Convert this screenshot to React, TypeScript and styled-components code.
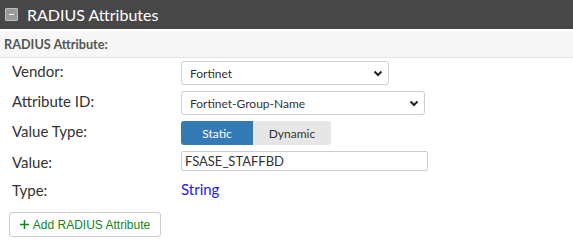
import React from "react";
import styled, { createGlobalStyle } from "styled-components";

const GlobalStyle = createGlobalStyle`
  body {
    margin: 0;
    background: #ffffff;
    font-family: Lato, "Liberation Sans", sans-serif;
  }
`;

const Panel = styled.div`
  width: 573px;
  background: #ffffff;
`;

const Header = styled.div`
  display: flex;
  align-items: center;
  gap: 9px;
  height: 29px;
  padding-left: 5px;
  background: #474747;
  color: #ffffff;
  font-size: 16px;
  box-sizing: border-box;
`;

const Collapse = styled.span`
  display: flex;
  align-items: center;
  justify-content: center;
  width: 11px;
  height: 11px;
  background: #9a9a9a;
  border: 1px solid #bdbdbd;
  border-radius: 1px;

  &::after {
    content: "";
    width: 5px;
    height: 1px;
    background: #ffffff;
  }
`;

const SubHeader = styled.div`
  margin-top: 2px;
  height: 27px;
  padding-left: 4px;
  display: flex;
  align-items: center;
  background: #f7f7f7;
  border-bottom: 1px solid #e3e3e3;
  font-size: 12.7px;
  font-weight: 700;
  color: #555555;
  box-sizing: border-box;
`;

const Form = styled.div`
  display: grid;
  grid-template-columns: 169px 1fr;
  row-gap: 6px;
  padding: 3px 0 0 12px;
`;

const Label = styled.div<{ $top?: number }>`
  font-size: 15px;
  color: #333333;
  padding-top: ${(p) => p.$top ?? 1}px;
  line-height: 18px;
`;

const SelectBox = styled.div<{ $w: number }>`
  width: ${(p) => p.$w}px;
  height: 24px;
  box-sizing: border-box;
  border: 1px solid #cfcfcf;
  border-radius: 3px;
  display: flex;
  align-items: center;
  justify-content: space-between;
  padding: 0 5px 0 8px;
  font-size: 12px;
  color: #333333;
`;

const Toggle = styled.div`
  display: flex;
  width: 150px;
  height: 24px;
  border-radius: 3px;
  overflow: hidden;
`;

const ToggleOption = styled.div<{ $active?: boolean; $w: number }>`
  width: ${(p) => p.$w}px;
  display: flex;
  align-items: center;
  justify-content: center;
  font-size: 12px;
  background: ${(p) => (p.$active ? "#337ab7" : "#e6e6e6")};
  color: ${(p) => (p.$active ? "#ffffff" : "#333333")};
`;

const TextInput = styled.div`
  width: 247px;
  height: 20px;
  box-sizing: border-box;
  border: 1px solid #cccccc;
  border-radius: 2px;
  display: flex;
  align-items: center;
  padding-left: 3px;
  font-size: 13px;
  color: #333333;
`;

const TypeValue = styled.div`
  font-size: 15px;
  color: #1a1aff;
  padding-top: 3px;
  line-height: 18px;
`;

const AddButton = styled.button`
  margin: 13px 0 0 9px;
  width: 152px;
  height: 25px;
  border: 1px solid #cccccc;
  border-radius: 3px;
  background: #ffffff;
  color: #11861a;
  font-family: "Liberation Sans", Arial, sans-serif;
  font-size: 12px;
  display: flex;
  align-items: center;
  justify-content: center;
  gap: 4px;
  padding: 0;
`;

const Plus = () => (
  <svg width="9" height="9" viewBox="0 0 9 9">
    <path d="M4.5 0 V9 M0 4.5 H9" stroke="#11861a" strokeWidth="1.5" />
  </svg>
);

const Chevron = () => (
  <svg width="10" height="7" viewBox="0 0 10 7">
    <path d="M1.5 1.5 L5 5 L8.5 1.5" fill="none" stroke="#222" strokeWidth="2" />
  </svg>
);

export default function App() {
  return (
    <Panel>
      <GlobalStyle />
      <Header>
        <Collapse />
        RADIUS Attributes
      </Header>
      <SubHeader>RADIUS Attribute:</SubHeader>
      <Form>
        <Label>Vendor:</Label>
        <SelectBox $w={208}>
          Fortinet
          <Chevron />
        </SelectBox>
        <Label>Attribute ID:</Label>
        <SelectBox $w={244}>
          Fortinet-Group-Name
          <Chevron />
        </SelectBox>
        <Label>Value Type:</Label>
        <Toggle>
          <ToggleOption $active $w={72}>Static</ToggleOption>
          <ToggleOption $w={78}>Dynamic</ToggleOption>
        </Toggle>
        <Label $top={2}>Value:</Label>
        <TextInput>FSASE_STAFFBD</TextInput>
        <Label $top={4}>Type:</Label>
        <TypeValue>String</TypeValue>
      </Form>
      <AddButton>
        <Plus />
        Add RADIUS Attribute
      </AddButton>
    </Panel>
  );
}
